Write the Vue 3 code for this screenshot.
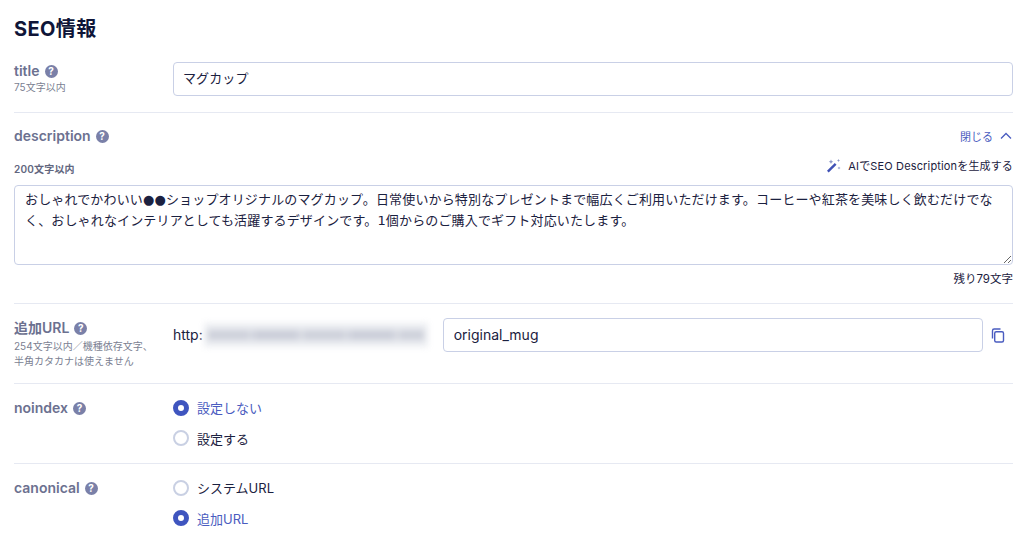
<script setup>
const descriptionText = 'おしゃれでかわいい●●ショップオリジナルのマグカップ。日常使いから特別なプレゼントまで幅広くご利用いただけます。コーヒーや紅茶を美味しく飲むだけでなく、おしゃれなインテリアとしても活躍するデザインです。1個からのご購入でギフト対応いたします。'
</script>

<template>
  <div class="page">
    <h2 class="heading">SEO情報</h2>

    <section class="row row-title">
      <div class="label-col">
        <div class="label">title <span class="help">?</span></div>
        <div class="hint">75文字以内</div>
      </div>
      <input class="field grow" value="マグカップ" />
    </section>

    <section class="desc">
      <div class="desc-head">
        <div class="label">description <span class="help">?</span></div>
        <a class="toggle">閉じる
          <svg width="12" height="8" viewBox="0 0 12 8"><path d="M1 6.500 6 1.500l5 5" fill="none" stroke="currentColor" stroke-width="1.300" /></svg>
        </a>
      </div>
      <div class="desc-sub">
        <span class="limit">200文字以内</span>
        <span class="ai">
          <svg width="15" height="15" viewBox="0 0 15 15">
            <path d="M1 12.800 8.800 5l1.700 1.700L2.700 14.500z" fill="#3f51b5" />
            <path d="M5 1.500 5.700 3 7.200 3.700 5.700 4.400 5 6 4.300 4.400 2.800 3.700 4.300 3zM12.500 1l.5 1 1 .5-1 .5-.5 1-.5-1-1-.5 1-.5zM13 8.500l.5 1 1 .5-1 .5-.5 1-.5-1-1-.5 1-.5z" fill="#8c98c8" />
          </svg>
          AIでSEO Descriptionを生成する
        </span>
      </div>
      <textarea class="area" :value="descriptionText"></textarea>
      <div class="remain">残り79文字</div>
    </section>

    <section class="row row-url">
      <div class="label-col">
        <div class="label">追加URL <span class="help">?</span></div>
        <div class="hint two">254文字以内／機種依存文字、<br />半角カタカナは使えません</div>
      </div>
      <span class="proto">http:</span>
      <span class="blurred"><span class="blur-text"></span></span>
      <input class="field url" value="original_mug" />
      <svg class="copy" width="16" height="16" viewBox="0 0 16 16">
        <path d="M2.500 11.500V3.700q0-1.700 1.700-1.700h6.300" fill="none" stroke="#4a5cc0" stroke-width="1.400" />
        <rect x="4.700" y="4.700" width="8.800" height="10.300" rx="1.500" fill="none" stroke="#4a5cc0" stroke-width="1.400" />
      </svg>
    </section>

    <section class="row row-radio">
      <div class="label-col">
        <div class="label">noindex <span class="help">?</span></div>
      </div>
      <div class="radios">
        <div class="radio on"><i></i>設定しない</div>
        <div class="radio"><i></i>設定する</div>
      </div>
    </section>

    <section class="row row-radio last">
      <div class="label-col">
        <div class="label">canonical <span class="help">?</span></div>
      </div>
      <div class="radios">
        <div class="radio"><i></i>システムURL</div>
        <div class="radio on"><i></i>追加URL</div>
      </div>
    </section>
  </div>
</template>

<style>
html, body { background: #fff; overflow: hidden; }
</style>

<style scoped>
.page {
  box-sizing: border-box;
  width: 1023px;
  height: 541px;
  overflow: hidden;
  padding: 17px 10px 0 14px;
  font-family: Inter, "Noto Sans CJK JP", sans-serif;
  font-size: 13px;
  color: #1b2140;
}
.heading {
  margin: 0 0 21px;
  height: 24px;
  font-size: 20px;
  line-height: 24px;
  font-weight: 700;
  letter-spacing: 0.4px;
  color: #0f1538;
}
.row {
  display: flex;
  align-items: flex-start;
  border-bottom: 1px solid #e6e9f2;
}
.label-col { width: 159px; flex: none; }
.label {
  font-size: 14px;
  line-height: 18px;
  font-weight: 600;
  color: #6c7190;
  display: flex;
  align-items: center;
  gap: 5px;
}
.help {
  width: 13px;
  height: 13px;
  border-radius: 50%;
  background: #7a80a8;
  color: #fff;
  font-size: 10px;
  line-height: 13px;
  font-weight: 700;
  text-align: center;
  flex: none;
}
.hint {
  font-size: 10px;
  line-height: 14px;
  color: #7b7f92;
}
.hint.two { line-height: 15px; margin-top: 2px; }
.field {
  box-sizing: border-box;
  height: 34px;
  border: 1px solid #c9d0e6;
  border-radius: 4px;
  padding: 0 10px;
  font: inherit;
  color: inherit;
  background: #fff;
  outline: none;
  min-width: 0;
}
.grow { flex: 1; padding: 0 9px 3px; letter-spacing: 0.1px; }
.row-title { height: 50px; }
.desc {
  border-bottom: 1px solid #e6e9f2;
  height: 191px;
  padding-top: 14px;
  box-sizing: border-box;
}
.desc-head {
  display: flex;
  justify-content: space-between;
  align-items: center;
  height: 18px;
}
.toggle {
  display: flex;
  align-items: center;
  gap: 7px;
  font-size: 11px;
  color: #4a5cc0;
  padding-right: 1px;
}
.desc-sub {
  display: flex;
  justify-content: space-between;
  align-items: flex-start;
  height: 18px;
  margin-top: 15px;
}
.limit { font-size: 10px; line-height: 18px; font-weight: 600; letter-spacing: 0.2px; color: #62667e; }
.ai {
  display: flex;
  align-items: center;
  gap: 7px;
  margin-top: -4px;
  height: 18px;
  font-size: 11px;
  letter-spacing: 0.15px;
  color: #1b2140;
}
.area {
  display: block;
  box-sizing: border-box;
  width: 100%;
  height: 80px;
  margin-top: 7px;
  border: 1px solid #c9d0e6;
  border-radius: 4px;
  padding: 3px 10px;
  font-family: "DejaVu Sans", "Noto Sans CJK JP", sans-serif;
  font-size: 13px;
  letter-spacing: 0.15px;
  line-height: 21px;
  color: inherit;
  outline: none;
}
.remain {
  text-align: right;
  font-size: 11.500px;
  line-height: 16px;
  margin-top: 6px;
}
.row-url { height: 80px; padding-top: 14px; box-sizing: border-box; }
.row-url .label-col { padding-top: 1px; }
.proto { line-height: 34px; font-size: 14px; }
.blurred {
  position: relative;
  width: 224px;
  height: 24px;
  margin: 5px 15px 0 1px;
  background: #eceef2;
  filter: blur(3px);
  flex: none;
}
.blur-text {
  position: absolute;
  left: 4px;
  right: 4px;
  top: 7px;
  height: 10px;
  background: repeating-linear-gradient(90deg, #cdd0da 0 40px, #d6d9e1 40px 46px, #cacdd8 46px 90px, #d9dbe3 90px 96px);
}
.url { width: 540px; flex: none; font-size: 14px; padding-bottom: 1px; }
.copy { margin: 9px 0 0 7px; flex: none; }
.row-radio { height: 80px; padding-top: 14px; box-sizing: border-box; }
.row-radio .label-col { padding-top: 1px; }
.row-radio.last { border-bottom: none; }
.radios { display: flex; flex-direction: column; gap: 11.500px; }
.radio {
  display: flex;
  align-items: center;
  gap: 8px;
  height: 19px;
  font-size: 13px;
}
.radio i {
  box-sizing: border-box;
  width: 16px;
  height: 16px;
  border-radius: 50%;
  border: 2px solid #c9d0e3;
  background: #fff;
}
.radio.on { color: #4a5cc0; }
.radio.on i { border: 5px solid #3f55bf; }
</style>
